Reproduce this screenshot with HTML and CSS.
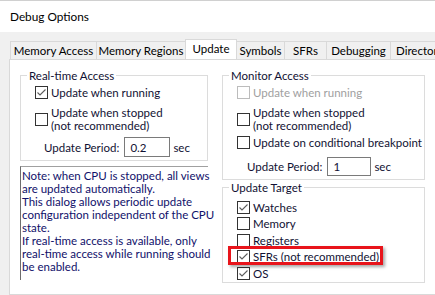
FILE: index.html
```html
<!DOCTYPE html>
<html>
<head>
<meta charset="utf-8">
<link rel="stylesheet" href="styles.css">
</head>
<body>
<div class="titlebar"><span class="title">Debug Options</span></div>
<div class="tabs">
  <div class="tab w-ma">Memory Access</div>
  <div class="tab w-mr">Memory Regions</div>
  <div class="tab active w-up">Update</div>
  <div class="tab w-sy">Symbols</div>
  <div class="tab w-sf">SFRs</div>
  <div class="tab w-db">Debugging</div>
  <div class="tab w-di">Directories</div>
</div>
<div class="panel">
  <div class="col col-left">
    <fieldset class="group g-rt">
      <legend>Real-time Access</legend>
      <div class="row r-first">
        <span class="box"><svg width="11" height="11" viewBox="0 0 11 11"><path d="M1.5 5.5 L4 8 L9.5 2.5" fill="none" stroke="#5c5c5c" stroke-width="1.1"/></svg></span>
        <span class="lbl">Update when running</span>
      </div>
      <div class="row r-two">
        <span class="box"></span>
        <span class="lbl">Update when stopped<br>(not recommended)</span>
      </div>
      <div class="period p-left">
        <span class="plbl">Update Period:</span>
        <span class="input in-left">0.2</span>
        <span class="unit">sec</span>
      </div>
    </fieldset>
    <div class="note">
      <div>Note: when CPU is stopped, all views<br>are updated automatically.</div>
      <div>This dialog allows periodic update<br>configuration independent of the CPU<br>state.</div>
      <div>If real-time access is available, only<br>real-time access while running should<br>be enabled.</div>
    </div>
  </div>
  <div class="col col-right">
    <fieldset class="group g-ma">
      <legend>Monitor Access</legend>
      <div class="row r-first disabled">
        <span class="box"></span>
        <span class="lbl">Update when running</span>
      </div>
      <div class="row r-two">
        <span class="box"></span>
        <span class="lbl">Update when stopped<br>(not recommended)</span>
      </div>
      <div class="row r-three">
        <span class="box"></span>
        <span class="lbl">Update on conditional breakpoint</span>
      </div>
      <div class="period p-right">
        <span class="plbl">Update Period:</span>
        <span class="input in-right">1</span>
        <span class="unit">sec</span>
      </div>
    </fieldset>
    <fieldset class="group g-ut">
      <legend>Update Target</legend>
      <div class="trow">
        <span class="box"><svg width="11" height="11" viewBox="0 0 11 11"><path d="M1.5 5.5 L4 8 L9.5 2.5" fill="none" stroke="#5c5c5c" stroke-width="1.1"/></svg></span>
        <span class="lbl">Watches</span>
      </div>
      <div class="trow">
        <span class="box"></span>
        <span class="lbl">Memory</span>
      </div>
      <div class="trow">
        <span class="box"></span>
        <span class="lbl">Registers</span>
      </div>
      <div class="trow marked">
        <span class="box"><svg width="11" height="11" viewBox="0 0 11 11"><path d="M1.5 5.5 L4 8 L9.5 2.5" fill="none" stroke="#5c5c5c" stroke-width="1.1"/></svg></span>
        <span class="lbl">SFRs (not recommended)</span>
        <span class="highlight"></span>
      </div>
      <div class="trow">
        <span class="box"><svg width="11" height="11" viewBox="0 0 11 11"><path d="M1.5 5.5 L4 8 L9.5 2.5" fill="none" stroke="#5c5c5c" stroke-width="1.1"/></svg></span>
        <span class="lbl">OS</span>
      </div>
    </fieldset>
  </div>
</div>
</body>
</html>
```
FILE: styles.css
```css
* { box-sizing: border-box; }
html, body { margin: 0; padding: 0; }
body {
  width: 435px;
  height: 295px;
  overflow: hidden;
  background: #f0f0f0;
  font-family: Lato, "Noto Sans", sans-serif;
  font-size: 11.5px;
  color: #111133;
}
.titlebar {
  height: 32px;
  background: #fff;
  border-top: 1px solid #d0d0d0;
  padding-left: 10px;
  display: flex;
  align-items: center;
  color: #000;
  font-size: 11.8px;
}
.tabs {
  display: flex;
  align-items: flex-end;
  padding-left: 10px;
  margin-top: 7px;
  height: 20px;
  white-space: nowrap;
  overflow: hidden;
}
.tab {
  height: 18px;
  flex: none;
  border: 1px solid #d9d9d9;
  border-bottom: none;
  background: #f0f0f0;
  display: flex;
  align-items: center;
  justify-content: center;
  margin-right: -1px;
  color: #000;
}
.tab.active {
  height: 21px;
  margin-bottom: -1px;
  background: #fff;
  position: relative;
  z-index: 1;
  align-items: flex-start;
  padding-top: 2px;
}
.w-ma { width: 87px; }
.w-mr { width: 90px; }
.w-up { width: 52px; }
.w-sy { width: 49px; }
.w-sf { width: 43px; }
.w-db { width: 65px; }
.w-di { width: 70px; justify-content: flex-start; padding-left: 5px; }

.panel {
  margin-left: 9px;
  width: 440px;
  height: 236px;
  background: #fff;
  border: 1px solid #d9d9d9;
  display: flex;
  gap: 14px;
  padding-left: 10px;
}
.col { display: flex; flex-direction: column; flex: none; }
.col-left { width: 188px; }
.col-right { width: 203px; }

.group {
  margin: 0;
  padding: 0;
  border: 1px solid #dcdcdc;
  min-width: 0;
}
.group legend {
  padding: 0 2px;
  margin-left: 6px;
  line-height: 15px;
}
.g-rt { margin-top: 8px; height: 93px; }
.g-ma { margin-top: 8px; height: 112px; }
.g-ut { margin-top: 0; height: 103px; }

.row { display: flex; align-items: center; line-height: 13px; white-space: nowrap; margin-left: 14px; }
.box {
  width: 13px;
  height: 13px;
  border: 1px solid #333;
  background: #fff;
  flex: none;
  display: flex;
  align-items: center;
  justify-content: center;
}
.lbl { margin-left: 3px; }
.r-first { margin-top: 3px; }
.r-two { margin-top: 7px; }
.r-three { margin-top: 4px; }
.disabled .box { border-color: #bcbcbc; }
.disabled .lbl { color: #a0a0a0; }

.period { display: flex; align-items: center; white-space: nowrap; }
.p-left { margin-top: 5px; margin-left: 23px; }
.p-right { margin-top: 8px; margin-left: 24px; }
.input {
  border: 1px solid #7a7a7a;
  background: #fff;
  display: flex;
  align-items: center;
  padding-left: 5px;
  margin-left: 5px;
}
.in-left { width: 46px; height: 20px; }
.in-right { width: 44px; height: 19px; }
.unit { margin-left: 3px; }

.note {
  margin-top: 5px;
  height: 114px;
  border-top: 1px solid #a0a0a0;
  border-left: 1px solid #6d6d6d;
  padding: 2px 0 0 1px;
  line-height: 13px;
  white-space: nowrap;
  color: #10106a;
}

.trow {
  display: flex;
  align-items: center;
  height: 16.5px;
  white-space: nowrap;
  margin-left: 14px;
}
.trow:first-of-type { margin-top: 4px; }
.marked { position: relative; }
.highlight {
  position: absolute;
  left: -9px;
  top: -3px;
  width: 155px;
  height: 19px;
  border: 3px solid #e8141b;
  box-shadow: 2px 2px 3px rgba(0, 0, 0, 0.35);
}
```
